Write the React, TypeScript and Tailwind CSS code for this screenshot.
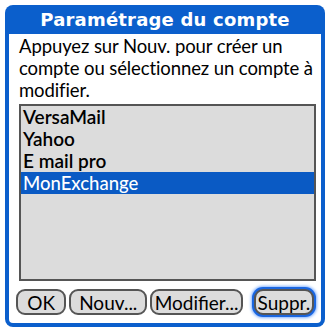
const items = ["VersaMail", "Yahoo", "E mail pro", "MonExchange"];

const Btn = ({ label, focus, w }: { label: string; focus?: boolean; w: string }) => (
  <div
    className={`${w} flex h-[26px] items-center justify-center rounded-[9px] border-2 border-[#555] bg-[#dcdcdc] text-[19px] leading-none text-black ${
      focus ? "shadow-[0_0_0_2px_#1a66e0,0_0_3px_3px_#7fb0ff]" : ""
    }`}
  >
    {label}
  </div>
);

export default function App() {
  return (
    <div className="h-[331px] w-[326px] bg-white pl-[5px] pt-[5px]" style={{ fontFamily: 'Lato, sans-serif' }}>
      <div className="flex h-[322px] w-[320px] flex-col rounded-[8px] bg-[#0b5fcc] px-[4px] pb-[4px]">
        <div className="flex h-[29px] items-center justify-center text-[18px] font-bold tracking-[0.2px] text-white" style={{ fontFamily: '"DejaVu Sans", sans-serif' }}>
          Paramétrage du compte
        </div>
        <div className="flex flex-1 flex-col rounded-b-[4px] bg-white px-[7px] pt-[1px]">
          <p className="whitespace-nowrap pl-[3px] text-[18.5px] leading-[22px] tracking-[-0.1px] text-black">
            Appuyez sur Nouv. pour créer un
            <br />
            compte ou sélectionnez un compte à
            <br />
            modifier.
          </p>
          <div className="mt-[3px] ml-[3px] h-[177px] w-[297px] border-2 border-[#555] bg-[#dcdcdc]">
            {items.map((it, i) => (
              <div
                key={it}
                className={`h-[22px] overflow-hidden px-[2px] leading-[22px] ${
                  i === 3 ? "bg-[#0a5ac4] text-[18.5px] font-medium text-white" : "text-[19px] font-semibold text-black"
                }`}
              >
                {it}
              </div>
            ))}
          </div>
          <div className="mt-[8px] flex gap-[3px]">
            <Btn label="OK" w="w-[51px]" />
            <Btn label="Nouv..." w="w-[79px]" />
            <Btn label="Modifier..." w="w-[94px]" />
            <div className="w-[5px]" />
            <Btn label="Suppr." w="w-[61px]" focus />
          </div>
        </div>
      </div>
    </div>
  );
}
